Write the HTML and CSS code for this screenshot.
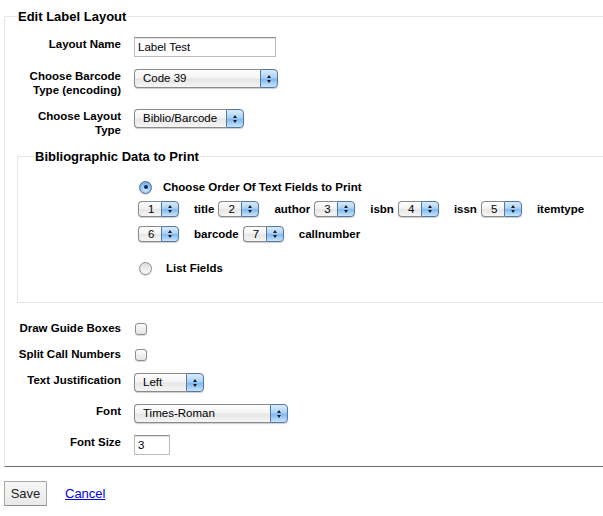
FILE: index.html
```html
<!DOCTYPE html>
<html>
<head>
<meta charset="utf-8">
<title>Edit Label Layout</title>
<link rel="stylesheet" href="styles.css">
</head>
<body>
<form class="form">
  <fieldset class="rows main">
    <legend class="legend">Edit Label Layout</legend>
    <ol class="fields upper">
      <li class="row">
        <label class="lbl">Layout Name</label>
        <input class="text name" type="text" value="Label Test">
      </li>
      <li class="row">
        <label class="lbl">Choose Barcode Type (encoding)</label>
        <span class="sel w-barcode"><span class="val">Code 39</span><span class="arr"><i class="up"></i><i class="dn"></i></span></span>
      </li>
      <li class="row">
        <label class="lbl">Choose Layout Type</label>
        <span class="sel w-layout"><span class="val">Biblio/Barcode</span><span class="arr"><i class="up"></i><i class="dn"></i></span></span>
      </li>
    </ol>

    <fieldset class="bib">
      <legend class="legend sub">Bibliographic Data to Print</legend>
      <div class="bib-body">
        <div class="opt">
          <span class="radio on"><span class="dot"></span></span>
          <span class="optlbl">Choose Order Of Text Fields to Print</span>
        </div>
        <div class="order">
          <span class="sel sm"><span class="val">1</span><span class="arr"><i class="up"></i><i class="dn"></i></span></span><span class="fld">title</span>
          <span class="sel sm"><span class="val">2</span><span class="arr"><i class="up"></i><i class="dn"></i></span></span><span class="fld">author</span>
          <span class="sel sm"><span class="val">3</span><span class="arr"><i class="up"></i><i class="dn"></i></span></span><span class="fld">isbn</span>
          <span class="sel sm"><span class="val">4</span><span class="arr"><i class="up"></i><i class="dn"></i></span></span><span class="fld">issn</span>
          <span class="sel sm"><span class="val">5</span><span class="arr"><i class="up"></i><i class="dn"></i></span></span><span class="fld">itemtype</span>
        </div>
        <div class="order">
          <span class="sel sm"><span class="val">6</span><span class="arr"><i class="up"></i><i class="dn"></i></span></span><span class="fld">barcode</span>
          <span class="sel sm"><span class="val">7</span><span class="arr"><i class="up"></i><i class="dn"></i></span></span><span class="fld">callnumber</span>
        </div>
        <div class="opt list">
          <span class="radio"></span>
          <span class="optlbl">List Fields</span>
        </div>
      </div>
    </fieldset>

    <ol class="fields lower">
      <li class="row">
        <label class="lbl">Draw Guide Boxes</label>
        <span class="check"></span>
      </li>
      <li class="row">
        <label class="lbl">Split Call Numbers</label>
        <span class="check"></span>
      </li>
      <li class="row">
        <label class="lbl">Text Justification</label>
        <span class="sel w-just"><span class="val">Left</span><span class="arr"><i class="up"></i><i class="dn"></i></span></span>
      </li>
      <li class="row">
        <label class="lbl">Font</label>
        <span class="sel w-font"><span class="val">Times-Roman</span><span class="arr"><i class="up"></i><i class="dn"></i></span></span>
      </li>
      <li class="row last">
        <label class="lbl">Font Size</label>
        <input class="text size" type="text" value="3">
      </li>
    </ol>
  </fieldset>

  <div class="action">
    <button class="save" type="button">Save</button>
    <a class="cancel" href="#">Cancel</a>
  </div>
</form>
</body>
</html>
```

FILE: styles.css
```css
html, body {
  margin: 0;
  padding: 0;
  overflow: hidden;
  background: #fff;
}

body {
  font-family: "Liberation Sans", Arial, sans-serif;
  color: #000;
}

.form {
  margin: 0;
  padding: 0 0 0 4px;
}

/* Outer fieldset */
.main {
  margin: 9px 0 0 0;
  padding: 0;
  border: 1px solid #e6e6e6;
  border-right: none;
  border-bottom: 1px solid #6b6b6b;
  min-inline-size: 0;
}

.legend {
  margin-left: 13px;
  padding: 0;
  font-size: 13px;
  font-weight: bold;
  line-height: 15px;
}

.legend.sub {
  margin-left: 17px;
}

.fields {
  list-style: none;
  margin: 0;
  padding: 13px 0 0 0;
}

.fields.lower {
  padding-top: 18px;
}

.row {
  display: flex;
  align-items: flex-start;
  margin-bottom: 12px;
}

.row.last {
  margin-bottom: 11px;
}

.lbl {
  flex: none;
  width: 108px;
  margin-left: 8px;
  margin-right: 13px;
  text-align: right;
  font-size: 11.5px;
  font-weight: bold;
  line-height: 14px;
}

/* Text inputs */
.text {
  box-sizing: border-box;
  height: 20px;
  margin: 0;
  padding: 0 3px;
  border: 1px solid #bcbcbc;
  border-top-color: #8d8d8d;
  box-shadow: inset 0 1px 1px rgba(0, 0, 0, 0.12);
  font-family: "Liberation Sans", Arial, sans-serif;
  font-size: 11.5px;
  color: #000;
  outline: none;
}

.text.name { width: 142px; }
.text.size { width: 36px; }

/* Aqua-like popup buttons */
.sel {
  display: inline-flex;
  flex: none;
  height: 19px;
  border-radius: 4px;
  box-shadow: 0 1px 1px rgba(0, 0, 0, 0.2);
  font-size: 11.5px;
  vertical-align: top;
}

.sel .val {
  flex: 1;
  min-width: 0;
  border: 1px solid #8a8a8a;
  border-right: none;
  border-radius: 4px 0 0 4px;
  background: linear-gradient(#fefefe 0%, #f4f4f4 45%, #e6e6e6 55%, #f6f6f6 100%);
  padding-left: 8px;
  line-height: 17px;
  white-space: nowrap;
  overflow: hidden;
}

.sel .arr {
  flex: none;
  width: 16px;
  border: 1px solid #56789f;
  border-radius: 0 4px 4px 0;
  background: linear-gradient(#d9ebfc 0%, #acd2f7 45%, #7fb9f1 55%, #c9e5fd 100%);
  display: flex;
  flex-direction: column;
  align-items: center;
  justify-content: center;
  gap: 2px;
}

.up, .dn {
  display: block;
  width: 0;
  height: 0;
  border-left: 2.5px solid transparent;
  border-right: 2.5px solid transparent;
}

.up { border-bottom: 3px solid #1b1b1b; }
.dn { border-top: 3px solid #1b1b1b; }

.w-barcode { width: 144px; }
.w-layout { width: 110px; }
.w-just { width: 70px; }
.w-font { width: 154px; }

.sel.sm {
  width: 41px;
  height: 16px;
}

.sel.sm .val {
  line-height: 14px;
  padding-left: 9px;
}

/* Inner fieldset */
.bib {
  margin: 0 0 0 12px;
  padding: 0;
  border: 1px solid #e6e6e6;
  border-right: none;
  min-inline-size: 0;
}

.bib-body {
  padding: 16px 0 27px 120px;
}

.opt {
  display: flex;
  align-items: center;
  height: 14px;
  margin-bottom: 7px;
}

.opt.list {
  margin-top: 19px;
  margin-bottom: 0;
}

.optlbl {
  font-size: 11.5px;
  font-weight: bold;
  line-height: 14px;
  margin-left: 11px;
}

.opt.list .optlbl {
  margin-left: 14px;
}

.radio {
  box-sizing: border-box;
  width: 13px;
  height: 13px;
  margin-left: 1px;
  border-radius: 50%;
  border: 1px solid #8a8a8a;
  background: linear-gradient(#dcdcdc, #fbfbfb);
  box-shadow: 0 1px 1px rgba(0, 0, 0, 0.15);
  display: flex;
  align-items: center;
  justify-content: center;
}

.radio.on {
  border-color: #4b6f9f;
  background: radial-gradient(circle at 50% 70%, #cfe6fd 0%, #8cc0f3 55%, #5e97d8 100%);
}

.radio .dot {
  width: 4px;
  height: 4px;
  border-radius: 50%;
  background: #142a4a;
}

.order {
  display: flex;
  align-items: center;
  height: 16px;
  margin-bottom: 9px;
}

.fld {
  margin-left: 15px;
  margin-right: 4px;
  font-size: 11.5px;
  font-weight: bold;
  line-height: 14px;
}

/* Checkbox */
.check {
  box-sizing: border-box;
  flex: none;
  width: 12px;
  height: 12px;
  margin: 2px 0 0 1px;
  border: 1px solid #8c8c8c;
  border-radius: 3px;
  background: linear-gradient(#fdfdfd, #e4e4e4);
  box-shadow: 0 1px 1px rgba(0, 0, 0, 0.15);
}

/* Actions */
.action {
  display: flex;
  align-items: center;
  padding-top: 14px;
}

.save {
  box-sizing: border-box;
  width: 43px;
  height: 25px;
  margin: 0;
  padding: 0;
  border: 1px solid #a8a8a8;
  border-bottom-color: #8e8e8e;
  background: linear-gradient(#f7f7f7, #e9e9e9);
  font-family: "Liberation Sans", Arial, sans-serif;
  font-size: 13px;
  color: #222;
}

.cancel {
  margin-left: 18px;
  font-size: 13px;
  color: #0000ee;
  text-decoration: underline;
}
```
